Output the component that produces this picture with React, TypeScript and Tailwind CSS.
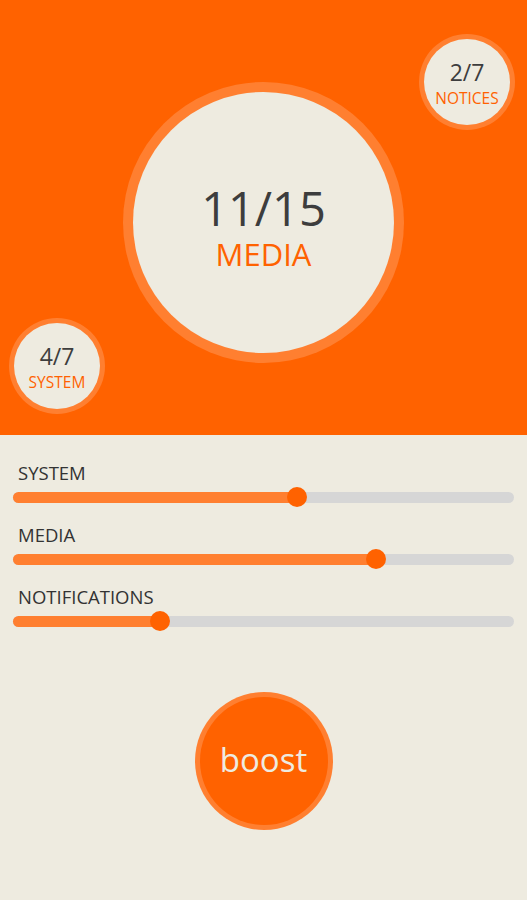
const font = { fontFamily: '"Open Sans", "Noto Sans", sans-serif' };

const sliders = [
  { label: "SYSTEM", value: 0.567 },
  { label: "MEDIA", value: 0.725 },
  { label: "NOTIFICATIONS", value: 0.293 },
];

function SmallBubble({ count, label, className }: { count: string; label: string; className: string }) {
  return (
    <div className={`absolute flex h-[96px] w-[96px] items-center justify-center rounded-full bg-[#ff7f30] ${className}`}>
      <div className="flex h-[86px] w-[86px] flex-col items-center rounded-full bg-[#eeebe0] pt-[22px]">
        <span className="text-[23px] leading-[22px] text-[#3d3d3d]">{count}</span>
        <span className="mt-[8px] text-[15.5px] leading-[14px] text-[#ff6200]">{label}</span>
      </div>
    </div>
  );
}

export default function App() {
  return (
    <div className="h-[900px] w-[527px] overflow-hidden bg-[#eeebe0]" style={font}>
      <div className="relative h-[435px] bg-[#ff6200]">
        <div className="absolute left-[123px] top-[82px] flex h-[281px] w-[281px] items-center justify-center rounded-full bg-[#ff7f30]">
          <div className="flex h-[261px] w-[261px] flex-col items-center rounded-full bg-[#eeebe0] pt-[93px]">
            <span className="text-[47px] leading-[46px] text-[#3d3d3d]">11/15</span>
            <span className="mt-[9px] text-[31px] leading-[29px] text-[#ff6200]">MEDIA</span>
          </div>
        </div>
        <SmallBubble count="2/7" label="NOTICES" className="left-[419px] top-[34px]" />
        <SmallBubble count="4/7" label="SYSTEM" className="left-[9px] top-[318px]" />
      </div>

      <div className="flex flex-col pt-[29px]">
        {sliders.map((s) => (
          <div key={s.label} className="mb-[19px] flex flex-col">
            <span className="pl-[18px] text-[18.5px] leading-[17px] text-[#333333]">{s.label}</span>
            <div className="relative ml-[13px] mt-[6px] flex h-[20px] w-[501px] items-center">
              <div className="h-[11px] w-full rounded-full bg-[#d6d6d6]" />
              <div
                className="absolute left-0 top-[4.5px] h-[11px] rounded-full bg-[#ff7f30]"
                style={{ width: `${s.value * 100}%` }}
              />
              <div
                className="absolute top-0 h-[20px] w-[20px] -translate-x-1/2 rounded-full bg-[#ff6200]"
                style={{ left: `${s.value * 100}%` }}
              />
            </div>
          </div>
        ))}

        <div className="mt-[42px] flex justify-center">
          <button className="flex h-[138px] w-[138px] items-center justify-center rounded-full bg-[#ff7f30]">
            <span className="flex h-[128px] w-[128px] items-center justify-center rounded-full bg-[#ff6200] pb-[2px] text-[33px] text-[#eeebe0]">
              boost
            </span>
          </button>
        </div>
      </div>
    </div>
  );
}
